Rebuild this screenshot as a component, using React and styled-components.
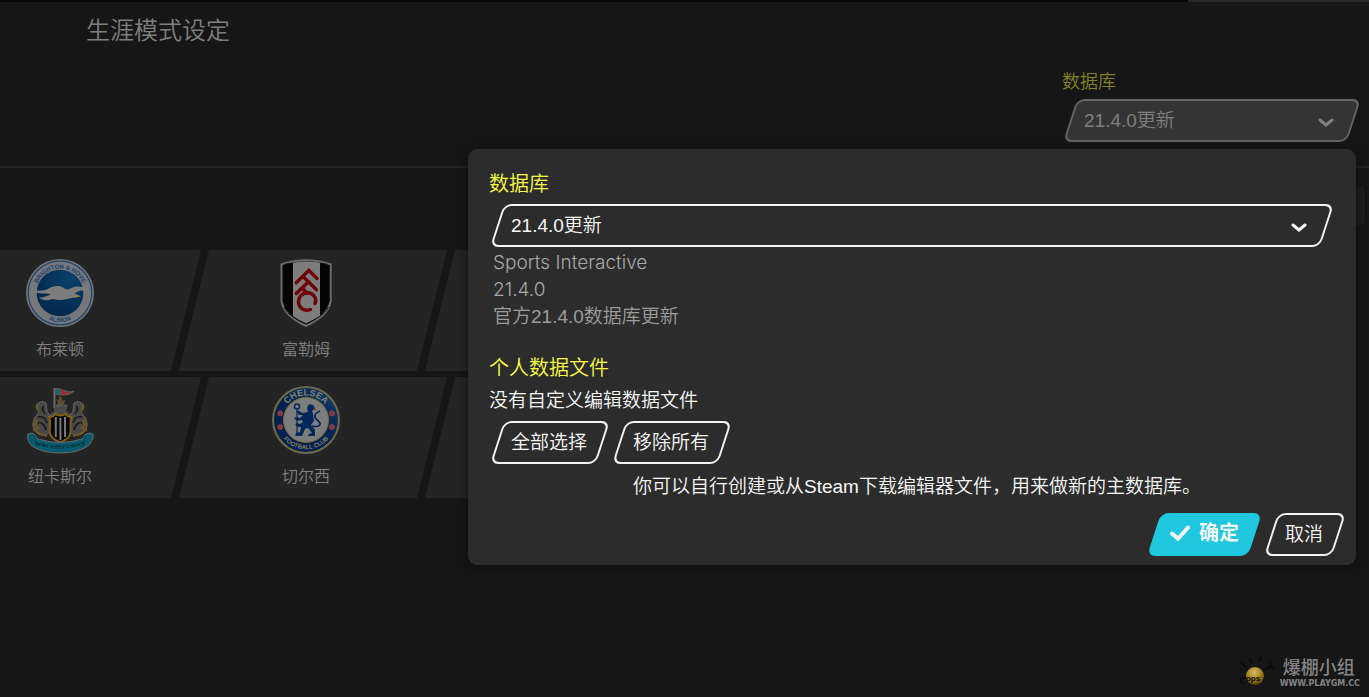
import React, { useState } from 'react'
import styled, { createGlobalStyle, css } from 'styled-components'

const databases = ['21.4.0更新']

const clubRows = [
  [
    { name: '布莱顿', crest: Brighton },
    { name: '富勒姆', crest: Fulham },
    {},
  ],
  [
    { name: '纽卡斯尔', crest: Newcastle },
    { name: '切尔西', crest: Chelsea },
    {},
  ],
]



export default function App() {
  const [database, setDatabase] = useState(databases[0])

  return (
    <Page>
      <GlobalStyle />
      <TopStrip><TopTab /></TopStrip>

      <Header>
        <Title>生涯模式设定</Title>
        <HeaderField>
          <HeaderLabel htmlFor='current-db'>数据库</HeaderLabel>
          <DatabaseSelect id='current-db' dimmed value={database} onChange={setDatabase} />
        </HeaderField>
      </Header>

      <Toolbar>
        <ToolbarButton type='button' aria-label='选项' />
      </Toolbar>

      <Clubs>
        {clubRows.map((row, i) => (
          <ClubRow key={i}>
            {row.map((club, j) => (
              <ClubCard key={j}>
                {club.crest && <club.crest />}
                {club.name && <ClubName>{club.name}</ClubName>}
              </ClubCard>
            ))}
          </ClubRow>
        ))}
      </Clubs>

      <Dialog role='dialog' aria-modal='true'>
        <Heading as='label' htmlFor='db'>数据库</Heading>
        <DatabaseSelect id='db' value={database} onChange={setDatabase} />
        <Details>
          <Latin>Sports Interactive</Latin>
          <Latin>21.4.0</Latin>
          <p>官方21.4.0数据库更新</p>
        </Details>

        <Heading>个人数据文件</Heading>
        <Text>没有自定义编辑数据文件</Text>
        <Buttons>
          <Button type='button'>全部选择</Button>
          <Button type='button'>移除所有</Button>
        </Buttons>
        <Hint>你可以自行创建或从Steam下载编辑器文件，用来做新的主数据库。</Hint>

        <Footer>
          <Button type='button' $primary>
            <svg width='20' height='18' viewBox='0 0 20 18'>
              <path d='M2 9.500 L8 14.800 L18 3.500' fill='none' stroke='#f4f4f4' strokeWidth='4' strokeLinecap='round' />
            </svg>
            确定
          </Button>
          <Button type='button'>取消</Button>
        </Footer>
      </Dialog>

      <Watermark>
        <Mascot />
        <div>
          <WatermarkName>爆棚小组</WatermarkName>
          <WatermarkUrl>WWW.PLAYGM.CC</WatermarkUrl>
        </div>
      </Watermark>
    </Page>
  )
}

function DatabaseSelect({ id, dimmed, value, onChange }) {
  return (
    <SelectBox $dimmed={dimmed}>
      <Select id={id} value={value} onChange={e => onChange(e.target.value)}>
        {databases.map(name => <option key={name}>{name}</option>)}
      </Select>
      <svg width='16' height='10' viewBox='0 0 16 10'>
        <path d='M2 2 L8 7 L14 2' fill='none' stroke='currentColor' strokeWidth='3' strokeLinecap='round' strokeLinejoin='miter' />
      </svg>
    </SelectBox>
  )
}

function Brighton() {
  return (
    <Crest viewBox='0 0 68 68'>
      <defs>
        <radialGradient id='bha' cx='.7' cy='.2' r='.8'>
          <stop offset='0' stopColor='#0a4069' />
          <stop offset='1' stopColor='#012a4e' />
        </radialGradient>
        <path id='bha-top' d='M9.5 34 A24.5 24.5 0 0 1 58.5 34' />
        <path id='bha-bottom' d='M5 34 A29 29 0 0 0 63 34' />
      </defs>
      <circle cx='34' cy='34' r='34' fill='#75777a' />
      <circle cx='34' cy='34' r='31.8' fill='none' stroke='#1d4470' strokeWidth='1.3' />
      <circle cx='34' cy='34' r='23.3' fill='url(#bha)' />
      <path
        d='M3.500 32.500 C10 31.500 15 32 20 31 C25 28 28 26.500 33 27 C37 27.500 38 30 42 30.500 C46 28.500 50 26.500 56 28
          C59 28.500 61 29 64 30.500 C58 31 52 31.500 48.500 34.500 L54.500 37 L50 38.500 C44 38.500 40 41 35 41
          C31 41 28 39.500 25 40.500 C20 42 16 41 13 38.500 C19 38.500 22 36.500 25 35 C18 34 10 34.500 3.500 32.500Z'
        fill='#7d7d7d'
      />
      <path d='M49.500 36.300 L55 37.300 L50 38.200Z' fill='#a58a08' />
      <CrestText fontSize='6' fill='#18406e'>
        <textPath href='#bha-top' startOffset='50%'>BRIGHTON &amp; HOVE</textPath>
      </CrestText>
      <CrestText fontSize='6' fill='#18406e'>
        <textPath href='#bha-bottom' startOffset='50%'>ALBION</textPath>
      </CrestText>
    </Crest>
  )
}

function Fulham() {
  return (
    <Crest viewBox='0 0 68 68'>
      <path d='M8.500 4.500 Q34 -4 59.700 4.500 V42 C58 54 47 62 34 68 C21 62 10 54 8.500 42Z' fill='#6c6c6c' />
      <path d='M10.500 6 Q34 -1.500 57.700 6 V41.500 C56 52 46 60 34 65.600 C22 60 12 52 10.500 41.500Z' fill='#050505' />
      <path d='M21 3.800 Q34 1.300 48 3.800 V57 Q42 61 34 64.500 Q26 61 21 57Z' fill='#7d7d7d' />
      <path d='M12 48 C16 56 24 60.500 34 64.700 C44 60.500 52 56 56.500 48' fill='none' stroke='#111' strokeWidth='1' />
      <g fill='none' stroke='#6c0006' strokeWidth='3.4' strokeLinecap='round' strokeLinejoin='miter'>
        <path d='M24.300 23.800 L36.800 11.300 L45 19.500' />
        <path d='M31 17.500 L44.500 30.800' />
        <path d='M24.300 34.500 L36.500 22.800' />
        <path d='M30 29 L34.500 33.500' />
        <path d='M43 44.500 C45.500 39 41 34 35.500 33.800 C30 34 26.300 38 26.500 43.500 C27 48.500 32 53 38.500 50.500' />
      </g>
    </Crest>
  )
}

function Newcastle() {
  return (
    <Crest viewBox='0 0 68 68'>
      <defs>
        <path id='nufc' d='M8 58 Q34 67 60 58' />
        <g id='seahorse'>
          <path
            d='M20 17 C14 13 9 19 12 24 C15 27 7 30 7 38 C7 46 12 50 20 49 L24 46 L24 29 C20 26 21 22 20 17Z'
            fill='#484848' stroke='#686868' strokeWidth='1'
          />
          <path d='M18 20 C15 22 17 25 19 28 M12 31 C17 30 20 33 21 37 M11 37 C15 35 19 39 20 44' stroke='#1a1a1a' strokeWidth='1.600' fill='none' />
          <path d='M12 18 C9 20 11 24 13 25 M8 33 L11 36 L8 39 L12 42 L8 44 L14 48 L21 50' stroke='#76591a' strokeWidth='1.800' fill='none' />
        </g>
      </defs>
      <path d='M28.500 2 V22' stroke='#686868' strokeWidth='2' />
      <path d='M29 2.500 C36 1.500 40 8 48 5 C45 9 37 10 29.500 8Z' fill='#8a3233' stroke='#707070' strokeWidth='.7' />
      <path d='M29.500 3 L34.500 4 V8 L29.500 8Z' fill='#126472' />
      <path d='M30 13 L32 16 L31 20 L34 22 L38 19 L39 14 L36 15 L36 12 L33 10 L33 14Z' fill='#5f4f28' />
      <path d='M29 25 L28 19 H31 V21 H33 V19 H36 V21 H38 V19 H41 L39 26Z' fill='#484848' stroke='#686868' strokeWidth='.700' />
      <path d='M24 28 L30 24 H39 L45 28 V32 H24Z' fill='#484848' />
      <use href='#seahorse' />
      <use href='#seahorse' transform='translate(68 0) scale(-1 1)' />
      <path d='M23 31 Q28 31 29 28 Q34 31 40 28 Q41 31 45.500 31 C43 37 46 42 44 49 Q41 54 34.500 56 Q27 54 24.500 49 C22 42 26 37 23 31Z' fill='#080808' stroke='#80620f' strokeWidth='1.800' />
      <path d='M29.800 31 V51 M34.400 32 V54 M39 31 V51' stroke='#777' strokeWidth='2' />
      <path d='M2 48 Q5 46 8 48 L12 53 Q34 60 56 53 L60 48 Q64 46 67 48 Q68 54 62 60 Q52 67 34 67 Q16 67 6 60 Q0 54 2 48Z' fill='#075b6e' stroke='#686868' strokeWidth='1' />
      <path d='M8 49 L11 61 M60 49 L57 61' stroke='#043c48' strokeWidth='.800' />
      <CrestText fontSize='4.800' fill='#061c25' $serif>
        <textPath href='#nufc' startOffset='50%'>NEWCASTLE UNITED</textPath>
      </CrestText>
    </Crest>
  )
}

function Chelsea() {
  return (
    <Crest viewBox='0 0 68 68'>
      <defs>
        <linearGradient id='cfc' x1='0' y1='1' x2='1' y2='0'>
          <stop offset='.5' stopColor='#03214f' />
          <stop offset='1' stopColor='#123f70' />
        </linearGradient>
        <path id='cfc-top' d='M9.500 34 A24.500 24.500 0 0 1 58.500 34' />
        <path id='cfc-bottom' d='M4.800 34 A29.200 29.200 0 0 0 63.200 34' />
      </defs>
      <circle cx='34' cy='34' r='34' fill='#65696c' />
      <circle cx='34' cy='34' r='32.500' fill='url(#cfc)' stroke='#786d30' strokeWidth='1.200' />
      <circle cx='34' cy='34' r='22.500' fill='#7d7d7d' stroke='#786d30' strokeWidth='1' />
      <g fill='#8c3536' stroke='#7a5550' strokeWidth='.600'>
        <circle cx='8.200' cy='27.400' r='2.600' />
        <circle cx='8.200' cy='41' r='2.600' />
        <circle cx='60' cy='27.400' r='2.600' />
        <circle cx='60' cy='41' r='2.600' />
      </g>
      <CrestText fontSize='9' fill='#858369'>
        <textPath href='#cfc-top' startOffset='50%'>CHELSEA</textPath>
      </CrestText>
      <CrestText fontSize='6' fill='#858369'>
        <textPath href='#cfc-bottom' startOffset='50%'>FOOTBALL CLUB</textPath>
      </CrestText>
      <path
        d='M35 22 L37 18 L41 19 L43 22 L42 24 L40 25 L41 28 L42 35 L39 39 L43 44 L43 50 L36 50 L37 48 L40 47
          L36 42 L33 43 L30 50 H23 L24 47 L28 46 L29 41 L26 41 L23 38 L25 37 L28 38 L31 36 L30 34 L25 35
          L22 32 L24 31 L28 32 L31 29 L27 29 L24 25 L27 25 L31 27 L36 26Z'
        fill='#03275a'
      />
      <path d='M25 23 V50' stroke='#03275a' strokeWidth='1.200' />
      <circle cx='25' cy='20.500' r='2.500' fill='none' stroke='#03275a' strokeWidth='1.500' />
      <path d='M40 40 C49 42 50 37 45 34 C41 30 43 27 48 25' fill='none' stroke='#03275a' strokeWidth='1.700' />
      <path d='M41 23 L44 23.500' stroke='#8c3536' strokeWidth='1.200' />
    </Crest>
  )
}

function Mascot() {
  return (
    <svg width='38' height='34' viewBox='0 0 38 34'>
      <defs>
        <radialGradient id='ball' cx='.45' cy='.3' r='.7'>
          <stop offset='0' stopColor='#d2bc70' />
          <stop offset='.5' stopColor='#b08824' />
          <stop offset='1' stopColor='#5a400a' />
        </radialGradient>
      </defs>
      <g fill='none' stroke='#080808' strokeWidth='1.500' strokeLinecap='round'>
        <path d='M5 7 L9 11 M13 3 L14 7 M24 1 L22 5 M27 14 L34 10 M33 7 L34 11 L37 13' />
        <path d='M9 22 C3 21 2 26 6 27' />
      </g>
      <circle cx='18' cy='20' r='9' fill='url(#ball)' />
      <CrestText x='16' y='25' fontSize='8' fill='#090909'>ops</CrestText>
    </svg>
  )
}



const GlobalStyle = createGlobalStyle`
  *, *::before {
    box-sizing: border-box;
  }

  body {
    margin: 0;
    background: #161616;
    overflow: hidden;
  }

  body, button, select {
    font-family: 'Liberation Sans', 'Noto Sans CJK SC', sans-serif;
    font-size: 19px;
    font-weight: 350;
  }

  h1, h2, p {
    margin: 0;
    font-weight: 350;
  }
`

const Page = styled.div`
  position: relative;
  min-height: 100vh;
  color: #f8f8f8;
  overflow: hidden;
`

const TopStrip = styled.div`
  display: flex;
  justify-content: flex-end;
  height: 2px;
  background: #050505;
`

const TopTab = styled.div`
  width: 181px;
  background: #2a2a2a;
`

const Header = styled.header`
  display: flex;
  justify-content: space-between;
  align-items: flex-start;
  padding: 11px 10px 24px 86px;
  border-bottom: 2px solid #232323;
`

const Title = styled.h1`
  font-size: 24px;
  line-height: 36px;
  color: #7f7f7f;
`

const HeaderField = styled.div`
  width: 297px;
  padding-top: 57px;
`

const HeaderLabel = styled.label`
  display: block;
  margin-bottom: 5px;
  font-size: 18px;
  line-height: 24px;
  color: #848220;
`

/* slanted outline behind buttons and selects */
const slanted = css`
  position: relative;
  z-index: 0;

  &::before {
    content: '';
    position: absolute;
    z-index: -1;
    inset: 0 5px;
    border: 2px solid #f4f4f4;
    border-radius: 8px;
    transform: skewX(-18deg);
  }
`

const SelectBox = styled.div`
  ${slanted}
  display: flex;
  align-items: center;
  height: 43px;
  margin-left: 3px;
  padding-right: 25px;
  color: ${p => p.$dimmed ? '#7f7f7f' : '#f8f8f8'};

  &::before {
    background: ${p => p.$dimmed ? '#343434' : 'transparent'};
    border-color: ${p => p.$dimmed ? '#646464' : '#f4f4f4'};
  }

  svg {
    margin-top: 4px;
    pointer-events: none;
  }
`

const Select = styled.select`
  flex: 1;
  align-self: stretch;
  padding: 0 19px;
  appearance: none;
  border: none;
  outline: none;
  background: transparent;
  color: inherit;
`

const Toolbar = styled.div`
  display: flex;
  justify-content: flex-end;
  padding: 16px 3px 23px;
`

const ToolbarButton = styled.button`
  width: 160px;
  height: 43px;
  border: 1px solid #121212;
  border-radius: 6px;
  background: #1c1c1c;
`

const Clubs = styled.div`
  display: flex;
  flex-direction: column;
  gap: 6px;
  margin-left: -52px;
`

const ClubRow = styled.div`
  display: flex;
  gap: 8px;
`

const ClubCard = styled.div`
  position: relative;
  z-index: 0;
  flex: none;
  display: flex;
  flex-direction: column;
  align-items: center;
  width: 238px;
  height: 121px;
  padding: 9px 14px 0 0;

  &::before {
    content: '';
    position: absolute;
    z-index: -1;
    inset: 0;
    background: #242424;
    transform: skewX(-14deg);
  }
`

const ClubName = styled.div`
  margin-top: 11px;
  font-size: 16px;
  line-height: 24px;
  color: #808080;
`

const Crest = styled.svg`
  width: 68px;
  height: 68px;
`

const CrestText = styled.text`
  font-family: ${p => p.$serif ? "'Liberation Serif', serif" : "'Liberation Sans', sans-serif"};
  font-weight: 700;
  text-anchor: middle;
`

const Dialog = styled.section`
  position: absolute;
  z-index: 10;
  top: 149px;
  right: 13px;
  width: 888px;
  padding: 23px 24px 9px 21px;
  border-radius: 9px;
  background: #2c2c2c;
  box-shadow: 0 2px 10px rgba(0, 0, 0, 0.5);
`

const Heading = styled.h2`
  display: block;
  margin-bottom: 8px;
  font-size: 20px;
  line-height: 24px;
  color: #fcfc44;
`

const Details = styled.div`
  margin: 2px 0 26px 4px;
  line-height: 27px;
  color: #9c9c9c;
`

const Latin = styled.p`
  font-family: Inter, sans-serif;
  color: #a8a8a8;
`

const Text = styled.p`
  line-height: 26px;
`

const Buttons = styled.div`
  display: flex;
  gap: 6px;
  margin: 7px 0 11px 3px;
`

const Button = styled.button`
  ${slanted}
  display: flex;
  align-items: center;
  gap: 9px;
  height: 43px;
  padding: 0 21px 4px 19px;
  border: none;
  background: transparent;
  color: #f8f8f8;
  cursor: pointer;

  ${p => p.$primary && css`
    padding: 0 21px 6px;
    font-size: 20px;
    font-weight: 700;

    &::before {
      background: #1fc8de;
      border-color: #1fc8de;
    }

    svg {
      margin-top: 3px;
    }
  `}
`

const Hint = styled.p`
  margin-left: 144px;
  line-height: 24px;
`

const Footer = styled.div`
  display: flex;
  justify-content: flex-end;
  gap: 6px;
  margin: 14px -12px 0 0;
`

const Watermark = styled.div`
  position: absolute;
  right: 9px;
  bottom: 7px;
  display: flex;
  align-items: center;
  gap: 5px;
  color: #858585;
`

const WatermarkName = styled.div`
  padding-left: 3px;
  font-size: 18px;
  font-weight: 500;
  line-height: 22px;
`

const WatermarkUrl = styled.div`
  font-family: 'DejaVu Sans', sans-serif;
  font-size: 8px;
  font-weight: 700;
  line-height: 10px;
`
